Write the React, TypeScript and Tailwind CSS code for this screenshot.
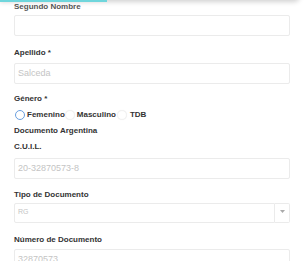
const labelCls = 'block text-[8px] leading-[10px] font-bold text-[#333]';
const inputCls =
  'h-[21px] w-full rounded-[2px] border border-[#ebebeb] bg-white px-[3px] text-[9px] text-[#c4c4c4] flex items-center';

const App = () => {
  return (
    <div className="relative h-[274px] w-[306px] overflow-hidden bg-white font-['Liberation_Sans',Arial,sans-serif]">
      {/* header shadow sitting over the scrolled form */}
      <div className="absolute -top-[8px] left-0 z-10 h-[8px] w-[300px] rounded-br-[6px] bg-white shadow-[0_2px_5px_rgba(0,0,0,0.18)]" />
      <div className="absolute top-0 left-0 z-20 h-[1.5px] w-[107px] bg-[#6fd6dc]" />

      <div className="h-[261px] overflow-hidden px-[14px] pt-[2px] pr-[16px]">
        <label className={`${labelCls} text-[#555]`}>Segundo Nombre</label>
        <div className={`${inputCls} mt-[3px] border-[#d9dbe4]`} />

        <label className={`${labelCls} mt-[12px]`}>Apellido *</label>
        <div className={`${inputCls} mt-[5px]`}>Salceda</div>

        <label className={`${labelCls} mt-[10px]`}>Género *</label>
        <div className="mt-[6px] flex h-[10px] items-center text-[8px] font-bold text-[#333]">
          <span className="ml-[1px] h-[10px] w-[10px] rounded-full border border-[#6a9fe0] bg-white" />
          <span className="ml-[2px]">Femenino</span>
          <span className="h-[10px] w-[10px] rounded-full border border-[#f2f2f2] bg-white shadow-[0_0_1px_rgba(0,0,0,0.08)]" />
          <span className="ml-[2px]">Masculino</span>
          <span className="ml-[1px] h-[10px] w-[10px] rounded-full border border-[#f2f2f2] bg-white shadow-[0_0_1px_rgba(0,0,0,0.08)]" />
          <span className="ml-[3px]">TDB</span>
        </div>

        <label className={`${labelCls} mt-[6px]`}>Documento Argentina</label>
        <label className={`${labelCls} mt-[6px]`}>C.U.I.L.</label>
        <div className={`${inputCls} mt-[6px] h-[20px]`}>20-32870573-8</div>

        <label className={`${labelCls} mt-[11px]`}>Tipo de Documento</label>
        <div className="mt-[3px] flex h-[20px] w-full">
          <div className="flex flex-1 items-start rounded-l-[2px] border border-[#ebebeb] px-[3px] pt-[3px] text-[7px] text-[#c4c4c4]">
            RG
          </div>
          <div className="flex w-[15px] items-start justify-center rounded-r-[2px] border border-l-0 border-[#ebebeb] pt-[6px]">
            <svg width="5" height="3" viewBox="0 0 5 3">
              <path d="M0 0h5L2.5 3z" fill="#aaa" />
            </svg>
          </div>
        </div>

        <label className={`${labelCls} mt-[12px]`}>Número de Documento</label>
        <div className={`${inputCls} mt-[4px]`}>32870573</div>
      </div>
    </div>
  );
};

export default App;
